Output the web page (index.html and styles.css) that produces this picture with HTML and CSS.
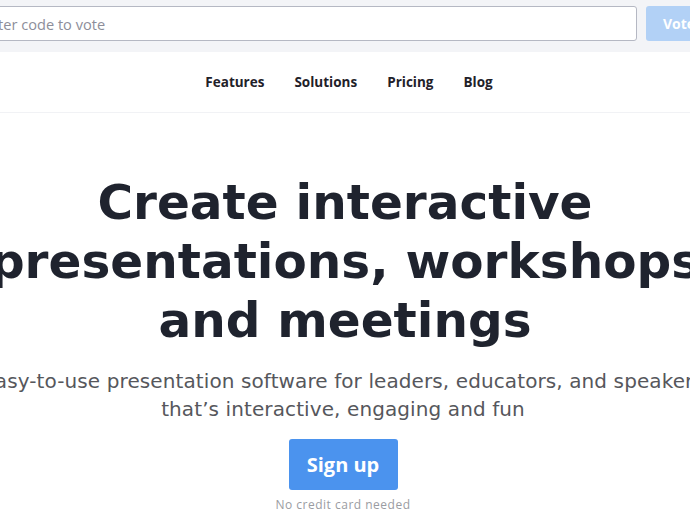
FILE: index.html
```html
<!DOCTYPE html>
<html lang="en">
<head>
  <meta charset="UTF-8">
  <title>Interactive presentations</title>
  <link rel="stylesheet" href="styles.css">
</head>
<body>
  <div class="votebar">
    <input class="code" type="text" placeholder="Enter code to vote">
    <button class="vote">Vote</button>
  </div>

  <nav class="nav">
    <a href="#">Features</a>
    <a href="#">Solutions</a>
    <a href="#">Pricing</a>
    <a href="#">Blog</a>
  </nav>

  <section class="hero">
    <h1>Create interactive<br>presentations, workshops<br>and meetings</h1>
    <p class="lead">Easy-to-use presentation software for leaders, educators, and speakers<br>that’s interactive, engaging and fun</p>
    <button class="signup">Sign up</button>
    <div class="note">No credit card needed</div>
  </section>
</body>
</html>
```

FILE: styles.css
```css
body { margin: 0; overflow: hidden; font-family: "Open Sans", sans-serif; color: #1f232e; background: #fff; }
.votebar { display: flex; gap: 9px; padding: 6px 0 11px; margin: 0 -60px 0 -32px; background: #f3f4f7; }
.code { flex: 1; height: 35px; box-sizing: border-box; padding: 0 12px; border: 1px solid #b5b8c3; border-radius: 3px; font: 14.6px "Open Sans", sans-serif; color: #333; }
.code::placeholder { color: #8d8e9a; }
.vote { width: 104px; height: 35px; padding: 0 17px; text-align: left; border: 0; border-radius: 3px; background: #b2d1f6; color: #fff; font: bold 14px "Open Sans", sans-serif; }
.nav { display: flex; justify-content: center; gap: 30px; height: 60px; align-items: center; padding-left: 8px; border-bottom: 1px solid #f1f2f5; }
.nav a { color: #1f2129; text-decoration: none; font-weight: bold; font-size: 13.5px; }
.hero { text-align: center; margin: 0 -198px 0 -202px; padding-top: 60px; }
h1 { margin: 0 0 0 4px; font-family: "DejaVu Sans", sans-serif; font-size: 48.5px; line-height: 59px; font-weight: bold; color: #1f232e; }
.lead { margin: 17px 0 0; font-family: "DejaVu Sans", sans-serif; font-size: 20px; line-height: 28px; letter-spacing: 0.1px; color: #56575c; }
.signup { margin-top: 16px; width: 109px; height: 51px; border: 0; border-radius: 3px; background: #4b93ee; color: #fff; font: bold 20px "Open Sans", sans-serif; }
.note { margin-top: 6px; font-size: 12px; letter-spacing: 0.5px; color: #9a9ca2; }
```
